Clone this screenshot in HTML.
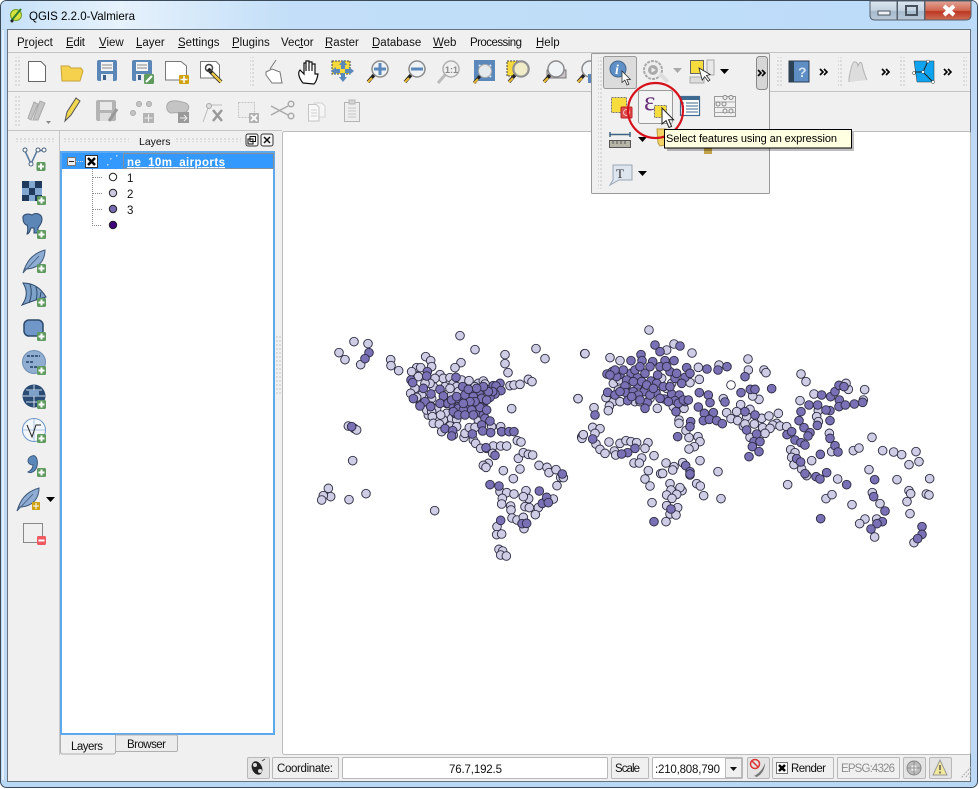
<!DOCTYPE html>
<html><head><meta charset="utf-8"><title>QGIS 2.2.0-Valmiera</title>
<style>
html,body{margin:0;padding:0;background:#fff;width:979px;height:789px;overflow:hidden}
svg{display:block;font-family:"Liberation Sans",sans-serif;font-size:11.5px}
text{fill:#111}
.c circle{r:13px;stroke:#2b2b40;stroke-width:2.7px}
.l circle{fill:#cfcde5}
.d circle{fill:#7a70b5}
</style></head><body>
<svg width="979" height="789" viewBox="0 0 979 789" xmlns="http://www.w3.org/2000/svg">
<defs>
<linearGradient id="tb" x1="0" x2="1" y1="0" y2="0"><stop offset="0" stop-color="#c5e0f8"/><stop offset=".12" stop-color="#e6f2fc"/><stop offset=".3" stop-color="#c2def8"/><stop offset="1" stop-color="#bcdcf9"/></linearGradient>
<linearGradient id="mb" x1="0" x2="0" y1="0" y2="1"><stop offset="0" stop-color="#dbe6f0"/><stop offset=".5" stop-color="#c3d2e0"/><stop offset=".55" stop-color="#a6bacd"/><stop offset="1" stop-color="#b9cad9"/></linearGradient>
<linearGradient id="cb" x1="0" x2="0" y1="0" y2="1"><stop offset="0" stop-color="#e2a596"/><stop offset=".5" stop-color="#d2654f"/><stop offset=".55" stop-color="#bc3620"/><stop offset="1" stop-color="#cf6f57"/></linearGradient>
<pattern id="gp" width="3" height="4" patternUnits="userSpaceOnUse"><rect width="2" height="2" fill="#dcdcdc"/></pattern>
<pattern id="gh" width="4" height="3" patternUnits="userSpaceOnUse"><rect width="2" height="2" fill="#dcdcdc"/></pattern>
<g id="pl"><rect width="9" height="9" rx="1.5" fill="#5f9a5f"/><path d="M4.5 1.5v6M1.5 4.5h6" stroke="#fff" stroke-width="2"/></g>
<g id="mg"><path d="M8 15L2 22" stroke="#222" stroke-width="3.4"/><path d="M6 18L2 22" stroke="#e9b935" stroke-width="2.2"/><circle cx="14" cy="9" r="8" fill="#f0f3f6" stroke="#8b8b8b" stroke-width="1.5"/></g>
<path id="cur" d="M0 0V16L4 12.6 7 19.5 9.6 18.4 6.6 11.8H11.6Z" fill="#fff" stroke="#222" stroke-width="1"/>
<path id="ar" d="M0 0H9L4.5 5Z" fill="#000"/>
<path id="dar" d="M0 0L3 3 0 6M4 0L7 3 4 6" fill="none" stroke="#000" stroke-width="1.6"/>
<g id="fe"><path d="M1 24C4 14 9 5 23 1 23 8 20 15 13 18 9 20 6 20 3 20Z" fill="#8fadd2" stroke="#3e5a7c"/><path d="M1 24L17 7" stroke="#3e5a7c" stroke-width=".8"/></g>
<g id="sv"><rect width="20" height="21" rx="2" fill="#5b86b8"/><rect x="4" y="2" width="12" height="9" fill="#f4f4f4"/><path d="M5 5h10M5 8h10" stroke="#888"/><rect x="4" y="14" width="12" height="7" fill="#e8ecf0"/><rect x="6" y="15" width="3" height="5" fill="#3f5f88"/></g>
</defs>

<!-- window frame -->
<rect x="0.5" y="0.5" width="977" height="787" rx="6" fill="#b9d8f6" stroke="#3b4a58"/>
<path d="M1 7Q1 1 7 1H971Q977 1 977 7V29H1Z" fill="url(#tb)"/>
<path d="M1 29H7V781H1ZM971 29H977V781H971Z" fill="#bdd9f5"/>
<rect x="2" y="30" width="2" height="750" fill="#e3effa"/>
<rect x="7.5" y="29.5" width="963" height="752" fill="#f0f0f0" stroke="#66747f"/>

<!-- title -->
<g><circle cx="16" cy="15" r="5.5" fill="#d8e23e" stroke="#6e9c2c"/><path d="M11 21L21 9" stroke="#2f7d2f" stroke-width="2"/><circle cx="12" cy="21" r="1.5" fill="#222"/></g>
<text x="29" y="20" font-size="12" textLength="106" lengthAdjust="spacingAndGlyphs" style="fill:#000">QGIS 2.2.0-Valmiera</text>

<!-- window buttons -->
<path d="M870 1H897V20H875Q870 20 870 15Z" fill="url(#mb)" stroke="#55606c"/>
<rect x="897.5" y="1" width="27" height="19" fill="url(#mb)" stroke="#55606c"/>
<path d="M925 1H971V15Q971 20 966 20H925Z" fill="url(#cb)" stroke="#55606c"/>
<rect x="878" y="11" width="12" height="4" fill="#eef2f6" stroke="#48525e"/>
<rect x="906" y="6" width="11" height="9" fill="none" stroke="#48525e" stroke-width="2"/>
<path d="M944 6L954 15M954 6L944 15" stroke="#fff" stroke-width="4"/>

<!-- menu -->
<g font-size="11.5">
<text x="17" y="46">Project</text><rect x="24" y="47" width="4" height="1" fill="#111"/>
<text x="66" y="46" textLength="19">Edit</text><rect x="66" y="47" width="7" height="1" fill="#111"/>
<text x="99" y="46">View</text><rect x="99" y="47" width="7" height="1" fill="#111"/>
<text x="136" y="46">Layer</text><rect x="136" y="47" width="6" height="1" fill="#111"/>
<text x="178" y="46">Settings</text><rect x="178" y="47" width="7" height="1" fill="#111"/>
<text x="232" y="46">Plugins</text><rect x="232" y="47" width="7" height="1" fill="#111"/>
<text x="281" y="46">Vector</text><rect x="299" y="47" width="4" height="1" fill="#111"/>
<text x="325" y="46">Raster</text><rect x="325" y="47" width="7" height="1" fill="#111"/>
<text x="372" y="46">Database</text><rect x="372" y="47" width="7" height="1" fill="#111"/>
<text x="433" y="46">Web</text><rect x="433" y="47" width="10" height="1" fill="#111"/>
<text x="470" y="46" textLength="52">Processing</text>
<text x="536" y="46">Help</text><rect x="536" y="47" width="7" height="1" fill="#111"/>
</g>

<!-- toolbar lines -->
<path d="M8 52.5H970M8 91.5H970M8 130.5H282" stroke="#c4c4c4"/>
<rect x="15" y="57" width="5" height="31" fill="url(#gp)"/><rect x="250" y="57" width="5" height="31" fill="url(#gp)"/>
<rect x="15" y="96" width="5" height="31" fill="url(#gp)"/>
<rect x="777" y="57" width="5" height="31" fill="url(#gp)"/><rect x="838" y="57" width="5" height="31" fill="url(#gp)"/><rect x="900" y="57" width="5" height="31" fill="url(#gp)"/><rect x="962" y="57" width="5" height="31" fill="url(#gp)"/>

<!-- toolbar 1 -->
<path d="M28.5 61.5H41L45.5 66V81.5H28.5Z" fill="#fff" stroke="#666"/>
<path d="M61 66H69L71 68H81L83 71 80 81H62Z" fill="#f6d14e" stroke="#c9a43c"/>
<use href="#sv" x="97" y="60"/>
<use href="#sv" x="132" y="60"/><rect x="144" y="74" width="10" height="10" rx="1.5" fill="#5f9a5f"/><path d="M146 82L152 76" stroke="#fff" stroke-width="2"/>
<path d="M165.500 61.500H181L186.500 66V80H165.500Z" fill="#fff" stroke="#777"/><rect x="179" y="75" width="10" height="9" rx="1" fill="#cfa313"/><path d="M184 76v7M180.500 79.500h7" stroke="#fff" stroke-width="1.500"/>
<path d="M200.500 61.500H216L219.500 65V78H200.500Z" fill="#fff" stroke="#777"/><path d="M208 69L221 82" stroke="#222" stroke-width="4"/><path d="M212 73L221 82" stroke="#e8c84a" stroke-width="2.500"/><circle cx="209" cy="68" r="3.500" fill="none" stroke="#444" stroke-width="1.500"/>
<path d="M276 60L270 69" stroke="#777"/><path d="M266 72L272 69 280 72 282 83H272L266 75Z" fill="#fff" stroke="#777"/>
<path d="M303 83C298 77 298 72 300 70L304 74V63H306V71 61H309V71 62H312V71 64H315V74H317L318 74C317 80 315 83 314 84Z" fill="#fff" stroke="#111" stroke-width="1.200"/>
<rect x="332" y="61" width="18" height="13" fill="#f5d93d" stroke="#444" stroke-dasharray="2 1"/>
<path d="M343 60L347 65H345V69H341V65H339ZM343 82L339 77H341V73H345V77H347ZM331 71L336 67V69H340V73H336V75ZM354 71L349 75V73H345V69H349V67Z" fill="#5b88bb"/>
<use href="#mg" x="366" y="60"/><path d="M380 63V75M374 69H386" stroke="#5b88bb" stroke-width="3"/>
<use href="#mg" x="403" y="60"/><path d="M411 69H423" stroke="#5b88bb" stroke-width="3"/>
<path d="M445 75L438 83" stroke="#bbb" stroke-width="3"/><circle cx="451" cy="69" r="8" fill="#f0f0f0" stroke="#b0b0b0" stroke-width="1.500"/>
<text x="445" y="73" font-size="9" font-weight="bold" style="fill:#888">1:1</text>
<rect x="474" y="60" width="21" height="21" fill="#5b88bb"/><path d="M479 65L491 77M491 65L479 77" stroke="#dfe7f0" stroke-width="2"/><circle cx="485" cy="71" r="6.500" fill="#e4e9ee" stroke="#aaa"/><path d="M480 76L474 83" stroke="#222" stroke-width="3"/><path d="M478 79L474 83" stroke="#e9b935" stroke-width="2"/>
<rect x="507" y="61" width="15" height="15" fill="#f5d93d" stroke="#444" stroke-dasharray="2 1"/><use href="#mg" x="507" y="60"/><circle cx="521" cy="69" r="7" fill="#f1ecc8" stroke="#999"/>
<rect x="547" y="70" width="19" height="8" fill="#c9c3c9" stroke="#777"/><use href="#mg" x="542" y="60"/>
<use href="#mg" x="576" y="60"/><rect x="588" y="74" width="5" height="9" fill="#5b88bb"/>

<!-- toolbar 2 (disabled) -->
<g stroke="#aaa" fill="#c4c4c4">
<path d="M28 118L34 102 38 104 31 120ZM33 120L40 101 45 103 38 120Z"/>
<path d="M46 121H51L48.500 124Z" fill="#888" stroke="none"/>
</g>
<path d="M65 121L67 112 76 98 80 101 71 115Z" fill="#f0d74f" stroke="#555"/>
<rect x="96" y="100" width="20" height="21" rx="2" fill="#b4b4b4"/><rect x="100" y="102" width="12" height="8" fill="#e8e8e8"/><rect x="100" y="113" width="11" height="8" fill="#ddd"/><path d="M109 121L117 109" stroke="#999" stroke-width="3"/>
<g fill="#c4c4c4" stroke="#aaa"><circle cx="139" cy="104" r="2.500"/><circle cx="149" cy="104" r="2.500"/><circle cx="133" cy="113" r="2.500"/></g><rect x="143" y="113" width="11" height="10" fill="#b4b4b4"/><path d="M148.500 114v8M144.500 118h8" stroke="#eee"/>
<path d="M167 105C168 100 177 100 182 102 188 103 190 106 188 110 186 114 177 112 172 113 168 113 166 109 167 105Z" fill="#c4c4c4" stroke="#aaa"/><rect x="178" y="112" width="11" height="11" fill="#999"/><path d="M180 118h6M184 115l3 3-3 3" stroke="#eee" fill="none"/>
<path d="M203 122L208 108M208 105L222 105" stroke="#bbb"/><circle cx="209" cy="106" r="2.500" fill="#ddd" stroke="#aaa"/><path d="M213 110L222 121M222 110L213 121" stroke="#999" stroke-width="2.500"/>
<rect x="238.500" y="102.500" width="16" height="15" fill="#eee" stroke="#c4c4c4" stroke-dasharray="2 1"/><rect x="249" y="113" width="10" height="10" rx="1" fill="#b0b0b0"/><path d="M251 115L257 121M257 115L251 121" stroke="#fff" stroke-width="1.800"/>
<path d="M271 106L288 115M271 115L288 106" stroke="#aaa" stroke-width="1.500"/><circle cx="291" cy="104" r="2.800" fill="none" stroke="#aaa" stroke-width="1.500"/><circle cx="291" cy="116" r="2.800" fill="none" stroke="#aaa" stroke-width="1.500"/>
<path d="M314 103H322L325 106V117H314Z" fill="#f5f5f5" stroke="#d4d4d4"/><path d="M308.500 104.500H316L319 107V121H308.500Z" fill="#f8f8f8" stroke="#c4c4c4"/><path d="M311 110h6M311 113h6M311 116h6" stroke="#d0d0d0"/>
<rect x="344.500" y="102.500" width="15" height="19" fill="#eee" stroke="#b4b4b4"/><rect x="349" y="100" width="6" height="4" fill="#d4d4d4" stroke="#b4b4b4"/><path d="M348 108h8M348 111h8M348 114h8M348 117h8" stroke="#c4c4c4"/>

<!-- right toolbar -->
<rect x="789" y="61" width="20" height="21" fill="#5f8ec4" stroke="#273a4f"/><rect x="789" y="61" width="5" height="21" fill="#2c4356"/><text x="798" y="77" font-size="14" font-weight="bold" style="fill:#d5e3f3">?</text>
<use href="#dar" x="820" y="69"/>
<path d="M849 82V78Q852 62 854 62 857 61 858 66 860 60 862 64 864 74 867 80 873 82Z" fill="#ddd" stroke="#b4b4b4"/>
<use href="#dar" x="882" y="69"/>
<path d="M914 61H934V82H917Z" fill="#10a4f0" stroke="#333" stroke-width=".5"/><path d="M914 72L923 72 928 61M923 72L933 82" stroke="#222" fill="none"/><circle cx="914" cy="73" r="1.500" fill="#fff" stroke="#333" stroke-width=".5"/><circle cx="923" cy="72" r="1.500" fill="#fff" stroke="#333" stroke-width=".5"/><circle cx="928" cy="61.500" r="1.500" fill="#fff" stroke="#333" stroke-width=".5"/><circle cx="933" cy="82" r="1.500" fill="#fff" stroke="#333" stroke-width=".5"/>
<use href="#dar" x="944" y="69"/>

<!-- left toolbar -->
<path d="M59.500 131V755" stroke="#c8c8c8"/>
<rect x="14" y="137" width="40" height="5" fill="url(#gh)"/><rect x="63" y="137" width="66" height="5" fill="url(#gh)"/><rect x="175" y="137" width="66" height="5" fill="url(#gh)"/>
<path d="M25 151L31 164 37 151 44 150" fill="none" stroke="#56799e" stroke-width="1.500"/><g fill="#fff" stroke="#44607f"><circle cx="25" cy="150" r="2"/><circle cx="31" cy="164" r="2"/><circle cx="38" cy="150" r="2"/><circle cx="44" cy="150" r="2"/></g><use href="#pl" x="36.500" y="162"/>
<rect x="22" y="181" width="20" height="20" fill="#82a8d1"/><path d="M22 181h7v7h-7zM35 181h7v7h-7zM29 188h6v7h-6zM22 195h7v6h-7zM35 195h7v6h-7z" fill="#1f3a5c"/><use href="#pl" x="37" y="196"/>
<path d="M23 219C22 214 28 213 32 215 36 212 42 214 42 219 42 224 39 226 38 228V233H34V228H31C30 231 29 234 27 234 28 231 28 228 27 225 25 225 23 222 23 219Z" fill="#5c86b6" stroke="#2d4a6c"/><use href="#pl" x="37" y="230"/>
<use href="#fe" x="22" y="249"/><use href="#pl" x="37" y="264"/>
<path d="M23 283Q38 283 46 297 35 300 22 305 30 294 23 283Z" fill="#7ea1c9" stroke="#2d4a6c"/><path d="M30 284Q33 294 29 303M36 287Q38 294 36 300M41 292L40 298" stroke="#2d4a6c" fill="none"/><use href="#pl" x="37" y="298"/>
<rect x="24" y="320" width="19" height="16" rx="5" fill="#7097c7" stroke="#2d4a6c" stroke-width="1.500"/><use href="#pl" x="37" y="332"/>
<g stroke="#6e8db3"><circle cx="34" cy="362" r="11.500" fill="#8faed2"/></g><path d="M27 356h13M26 362h8M30 367h8" stroke="#3e5a7c" stroke-width="2" stroke-dasharray="3 1"/><use href="#pl" x="37" y="366"/>
<circle cx="34" cy="396" r="11.500" fill="#2a4c74"/><path d="M23 396H45M26 390H42M26 402H42M34 385V407" stroke="#cfdceb"/><rect x="29" y="390" width="10" height="6" fill="#7da1c9"/><use href="#pl" x="37" y="400"/>
<circle cx="34" cy="430" r="11.500" fill="#f4f8fc" stroke="#6f97c6"/><path d="M23 430H45M34 419V441" stroke="#a8c3df"/><path d="M27 425L32 437 36 425 41 425" fill="none" stroke="#222"/><use href="#pl" x="37" y="434"/>
<path d="M32 456C37 454 38 462 37 466 36 471 31 474 28 472 32 470 33 467 33 465 27 465 26 458 32 456Z" fill="#5b88bb" stroke="#3e5a7c"/><use href="#pl" x="37" y="468"/>
<use href="#fe" x="16" y="487"/><rect x="32" y="502" width="8" height="8" fill="#cfa313"/><path d="M36 503v6M33 506h6" stroke="#fff"/>
<use href="#ar" x="46" y="497"/>
<rect x="23.500" y="523.500" width="19" height="19" fill="#f0f0f0" stroke="#888"/><rect x="37" y="536" width="9" height="9" rx="1.500" fill="#ee5a60"/><path d="M38.500 540.500h6" stroke="#fff" stroke-width="2"/>

<!-- layers panel -->
<text x="139" y="145" font-size="10.500">Layers</text>
<rect x="246" y="134" width="12" height="12" rx="2" fill="#f5f5f5" stroke="#333"/><path d="M250 136.500h5.500v5h-5.500zM248 139h5v5h-5z" fill="#f5f5f5" stroke="#111"/>
<rect x="261" y="134" width="12" height="12" rx="2" fill="#f5f5f5" stroke="#333"/><path d="M264 137l6 6M270 137l-6 6" stroke="#111" stroke-width="1.500"/>
<rect x="61" y="152" width="213" height="582" fill="#fff" stroke="#5ea9ee" stroke-width="2"/>
<rect x="62" y="153" width="212" height="16" fill="#3399ff"/>
<rect x="67.500" y="157.500" width="8" height="8" fill="#eee" stroke="#777"/><path d="M69 161.500h5" stroke="#222"/>
<path d="M76 161.500h8" stroke="#cde" stroke-dasharray="1 1"/>
<rect x="85.500" y="155.500" width="12" height="12" fill="#fff" stroke="#333"/><path d="M88 158l7 7M95 158l-7 7" stroke="#000" stroke-width="2.500"/>
<g fill="#bcdcf7"><rect x="107" y="164" width="1.500" height="1.500"/><rect x="110" y="158" width="1.500" height="1.500"/><rect x="116" y="155" width="1.500" height="1.500"/></g>
<rect x="123.500" y="153.500" width="150" height="15" fill="none" stroke="#d6893a" stroke-dasharray="1 1"/>
<text x="127" y="166" font-size="11.500" font-weight="bold" style="fill:#fff" text-decoration="underline" textLength="98">ne_10m_airports</text>
<path d="M92.500 169V225.500H102M93 177.500H102M93 193.500H102M93 209.500H102" fill="none" stroke="#888" stroke-dasharray="1 1"/>
<circle cx="113" cy="177" r="3.700" fill="#fff" stroke="#222"/><circle cx="113" cy="193" r="3.700" fill="#cbc9e2" stroke="#222"/><circle cx="113" cy="209" r="3.700" fill="#756bb1" stroke="#222"/><circle cx="113" cy="225" r="3.700" fill="#3f007d" stroke="#222"/>
<text x="127" y="182" font-size="11.500">1</text><text x="127" y="198" font-size="11.500">2</text><text x="127" y="214" font-size="11.500">3</text>

<!-- tabs -->
<path d="M60.500 735V752Q60.500 754 63 754H113Q115.500 754 115.500 752V735" fill="#f0f0f0" stroke="#b0b0b0"/>
<path d="M116 735H176Q177.500 735 177.500 737V750Q177.500 751.500 176 751.500H116" fill="#ececec" stroke="#b0b0b0"/>
<text x="71" y="750" font-size="11.500" textLength="32">Layers</text><text x="127" y="748" font-size="11.500" textLength="39">Browser</text>

<!-- canvas -->
<rect x="282.500" y="131.500" width="688" height="623" rx="2" fill="#fff" stroke="#bcbcbc"/>
<rect x="276" y="336" width="5" height="60" fill="url(#gp)"/>

<!-- points -->
<g class="c l" transform="translate(310 320) scale(.33333)">
<circle cx="450" cy="47"/><circle cx="132" cy="65"/><circle cx="174" cy="71"/><circle cx="87" cy="98"/><circle cx="105" cy="119"/><circle cx="152" cy="134"/><circle cx="495" cy="89"/><circle cx="585" cy="104"/><circle cx="585" cy="131"/><circle cx="594" cy="158"/><circle cx="678" cy="86"/><circle cx="705" cy="116"/><circle cx="824" cy="101"/><circle cx="804" cy="236"/><circle cx="605" cy="266"/><circle cx="815" cy="351"/><circle cx="819" cy="345"/>
<circle cx="242" cy="119"/><circle cx="243" cy="137"/><circle cx="266" cy="152"/><circle cx="347" cy="110"/><circle cx="362" cy="122"/><circle cx="365" cy="140"/><circle cx="453" cy="128"/><circle cx="435" cy="143"/><circle cx="320" cy="143"/><circle cx="332" cy="143"/><circle cx="305" cy="155"/><circle cx="390" cy="164"/><circle cx="400" cy="175"/><circle cx="420" cy="173"/><circle cx="455" cy="180"/><circle cx="477" cy="182"/><circle cx="505" cy="190"/><circle cx="520" cy="183"/><circle cx="525" cy="192"/><circle cx="600" cy="197"/><circle cx="612" cy="195"/><circle cx="630" cy="193"/><circle cx="655" cy="178"/><circle cx="666" cy="185"/>
<circle cx="375" cy="175"/><circle cx="405" cy="200"/><circle cx="370" cy="200"/><circle cx="430" cy="190"/><circle cx="410" cy="280"/><circle cx="400" cy="300"/><circle cx="355" cy="285"/><circle cx="350" cy="270"/><circle cx="380" cy="265"/><circle cx="335" cy="225"/><circle cx="315" cy="205"/><circle cx="325" cy="170"/><circle cx="440" cy="200"/><circle cx="495" cy="200"/><circle cx="425" cy="225"/><circle cx="505" cy="300"/>
<circle cx="302" cy="220"/><circle cx="320" cy="232"/><circle cx="330" cy="255"/><circle cx="360" cy="190"/><circle cx="345" cy="190"/><circle cx="365" cy="235"/><circle cx="362" cy="258"/><circle cx="365" cy="275"/><circle cx="367" cy="290"/><circle cx="370" cy="310"/><circle cx="388" cy="312"/><circle cx="392" cy="285"/><circle cx="410" cy="250"/><circle cx="420" cy="205"/><circle cx="445" cy="215"/><circle cx="425" cy="295"/><circle cx="440" cy="298"/><circle cx="420" cy="318"/><circle cx="440" cy="320"/><circle cx="395" cy="335"/><circle cx="430" cy="345"/><circle cx="462" cy="352"/><circle cx="465" cy="340"/><circle cx="478" cy="323"/><circle cx="495" cy="322"/><circle cx="490" cy="360"/><circle cx="497" cy="370"/><circle cx="512" cy="385"/><circle cx="530" cy="385"/><circle cx="550" cy="378"/><circle cx="572" cy="378"/><circle cx="590" cy="378"/><circle cx="622" cy="362"/><circle cx="633" cy="366"/><circle cx="572" cy="320"/><circle cx="545" cy="320"/><circle cx="575" cy="335"/><circle cx="548" cy="400"/><circle cx="535" cy="430"/><circle cx="520" cy="436"/><circle cx="528" cy="442"/><circle cx="625" cy="415"/><circle cx="640" cy="398"/><circle cx="655" cy="403"/><circle cx="668" cy="405"/><circle cx="580" cy="452"/><circle cx="630" cy="447"/><circle cx="610" cy="476"/><circle cx="687" cy="436"/><circle cx="711" cy="442"/><circle cx="717" cy="458"/><circle cx="738" cy="449"/><circle cx="752" cy="472"/><circle cx="760" cy="473"/><circle cx="741" cy="497"/>
<circle cx="570" cy="515"/><circle cx="590" cy="518"/><circle cx="612" cy="522"/><circle cx="577" cy="535"/><circle cx="575" cy="552"/><circle cx="602" cy="558"/><circle cx="603" cy="570"/><circle cx="648" cy="512"/><circle cx="656" cy="536"/><circle cx="640" cy="530"/><circle cx="645" cy="560"/><circle cx="658" cy="563"/><circle cx="685" cy="563"/><circle cx="676" cy="584"/><circle cx="606" cy="594"/><circle cx="621" cy="600"/><circle cx="640" cy="592"/><circle cx="642" cy="626"/><circle cx="561" cy="620"/><circle cx="560" cy="644"/><circle cx="575" cy="642"/><circle cx="567" cy="688"/><circle cx="578" cy="693"/><circle cx="572" cy="705"/><circle cx="589" cy="708"/><circle cx="730" cy="537"/>
<circle cx="128" cy="422"/><circle cx="115" cy="318"/><circle cx="132" cy="325"/><circle cx="140" cy="330"/><circle cx="55" cy="505"/><circle cx="62" cy="530"/><circle cx="40" cy="527"/><circle cx="35" cy="540"/><circle cx="117" cy="539"/><circle cx="168" cy="521"/><circle cx="374" cy="572"/>
</g>
<g class="c d" transform="translate(310 320) scale(.33333)">
<circle cx="177" cy="98"/><circle cx="165" cy="116"/><circle cx="125" cy="320"/><circle cx="303" cy="180"/><circle cx="308" cy="188"/><circle cx="310" cy="236"/><circle cx="352" cy="155"/><circle cx="350" cy="168"/><circle cx="340" cy="205"/><circle cx="363" cy="222"/><circle cx="390" cy="208"/><circle cx="400" cy="228"/><circle cx="345" cy="245"/><circle cx="330" cy="258"/><circle cx="362" cy="260"/><circle cx="390" cy="250"/><circle cx="414" cy="250"/><circle cx="438" cy="172"/><circle cx="458" cy="200"/><circle cx="485" cy="215"/><circle cx="510" cy="215"/><circle cx="528" cy="207"/><circle cx="550" cy="197"/><circle cx="570" cy="190"/><circle cx="558" cy="198"/><circle cx="573" cy="212"/><circle cx="555" cy="222"/><circle cx="540" cy="232"/><circle cx="520" cy="250"/><circle cx="500" cy="240"/><circle cx="475" cy="235"/><circle cx="455" cy="235"/><circle cx="440" cy="245"/><circle cx="430" cy="262"/><circle cx="445" cy="260"/><circle cx="470" cy="255"/><circle cx="495" cy="258"/><circle cx="520" cy="265"/><circle cx="435" cy="280"/><circle cx="450" cy="275"/><circle cx="475" cy="278"/><circle cx="505" cy="278"/><circle cx="520" cy="285"/><circle cx="525" cy="295"/><circle cx="540" cy="303"/><circle cx="515" cy="315"/><circle cx="518" cy="333"/><circle cx="542" cy="338"/><circle cx="575" cy="335"/><circle cx="597" cy="335"/><circle cx="612" cy="335"/><circle cx="405" cy="326"/><circle cx="428" cy="332"/><circle cx="425" cy="348"/><circle cx="487" cy="342"/><circle cx="528" cy="383"/><circle cx="555" cy="406"/><circle cx="540" cy="494"/><circle cx="567" cy="498"/><circle cx="688" cy="513"/><circle cx="697" cy="550"/><circle cx="710" cy="532"/><circle cx="715" cy="548"/><circle cx="572" cy="601"/><circle cx="636" cy="611"/><circle cx="650" cy="610"/><circle cx="757" cy="462"/>
<circle cx="425" cy="240"/><circle cx="440" cy="230"/><circle cx="465" cy="225"/><circle cx="490" cy="230"/><circle cx="515" cy="235"/><circle cx="530" cy="240"/><circle cx="548" cy="215"/><circle cx="535" cy="215"/><circle cx="520" cy="200"/><circle cx="500" cy="205"/><circle cx="475" cy="208"/><circle cx="445" cy="265"/><circle cx="460" cy="270"/><circle cx="485" cy="270"/><circle cx="510" cy="262"/><circle cx="530" cy="270"/><circle cx="495" cy="245"/><circle cx="480" cy="245"/><circle cx="460" cy="250"/><circle cx="430" cy="275"/><circle cx="445" cy="285"/><circle cx="465" cy="285"/><circle cx="490" cy="285"/>
</g>
<g class="c l" transform="translate(570 320) scale(.33333)">
<circle cx="237" cy="30"/><circle cx="45" cy="101"/><circle cx="120" cy="113"/><circle cx="150" cy="122"/><circle cx="312" cy="72"/><circle cx="290" cy="90"/><circle cx="366" cy="99"/><circle cx="24" cy="236"/><circle cx="534" cy="117"/><circle cx="535" cy="150"/><circle cx="582" cy="150"/><circle cx="588" cy="158"/><circle cx="693" cy="162"/><circle cx="708" cy="185"/>
<circle cx="130" cy="190"/><circle cx="170" cy="195"/><circle cx="120" cy="225"/><circle cx="130" cy="245"/><circle cx="195" cy="245"/><circle cx="240" cy="235"/><circle cx="275" cy="175"/><circle cx="290" cy="205"/><circle cx="330" cy="250"/><circle cx="310" cy="260"/><circle cx="305" cy="190"/><circle cx="210" cy="245"/>
<circle cx="385" cy="142"/><circle cx="388" cy="178"/><circle cx="360" cy="188"/><circle cx="447" cy="135"/><circle cx="150" cy="180"/><circle cx="145" cy="210"/><circle cx="108" cy="233"/><circle cx="150" cy="245"/><circle cx="118" cy="258"/><circle cx="115" cy="272"/><circle cx="72" cy="263"/><circle cx="262" cy="265"/><circle cx="342" cy="265"/><circle cx="327" cy="300"/><circle cx="327" cy="310"/><circle cx="348" cy="332"/><circle cx="357" cy="353"/><circle cx="384" cy="350"/><circle cx="390" cy="365"/><circle cx="373" cy="380"/><circle cx="357" cy="387"/>
<circle cx="68" cy="322"/><circle cx="90" cy="326"/><circle cx="75" cy="340"/><circle cx="36" cy="355"/><circle cx="40" cy="344"/><circle cx="78" cy="372"/><circle cx="90" cy="388"/><circle cx="105" cy="400"/><circle cx="117" cy="366"/><circle cx="150" cy="370"/><circle cx="168" cy="362"/><circle cx="183" cy="365"/><circle cx="200" cy="368"/><circle cx="234" cy="368"/><circle cx="225" cy="385"/><circle cx="133" cy="393"/><circle cx="137" cy="405"/><circle cx="215" cy="414"/><circle cx="192" cy="429"/><circle cx="208" cy="429"/><circle cx="252" cy="407"/><circle cx="288" cy="429"/><circle cx="390" cy="422"/><circle cx="312" cy="440"/><circle cx="338" cy="428"/><circle cx="308" cy="450"/><circle cx="235" cy="452"/><circle cx="272" cy="461"/><circle cx="278" cy="460"/><circle cx="225" cy="477"/><circle cx="240" cy="498"/><circle cx="300" cy="491"/><circle cx="336" cy="512"/><circle cx="330" cy="503"/><circle cx="303" cy="510"/><circle cx="290" cy="525"/><circle cx="320" cy="523"/><circle cx="306" cy="535"/><circle cx="290" cy="557"/><circle cx="323" cy="563"/><circle cx="300" cy="582"/><circle cx="318" cy="585"/><circle cx="288" cy="605"/><circle cx="246" cy="548"/><circle cx="401" cy="527"/><circle cx="453" cy="536"/><circle cx="444" cy="455"/><circle cx="380" cy="491"/><circle cx="391" cy="498"/><circle cx="360" cy="465"/>
<circle cx="470" cy="278"/><circle cx="460" cy="236"/><circle cx="567" cy="238"/><circle cx="548" cy="228"/><circle cx="512" cy="254"/><circle cx="500" cy="275"/><circle cx="483" cy="296"/><circle cx="503" cy="302"/><circle cx="540" cy="268"/><circle cx="530" cy="290"/><circle cx="575" cy="295"/><circle cx="597" cy="288"/><circle cx="625" cy="280"/><circle cx="620" cy="310"/><circle cx="608" cy="315"/><circle cx="630" cy="318"/><circle cx="650" cy="320"/><circle cx="520" cy="318"/><circle cx="553" cy="312"/><circle cx="578" cy="323"/><circle cx="600" cy="325"/><circle cx="585" cy="340"/><circle cx="540" cy="352"/><circle cx="525" cy="312"/>
<circle cx="690" cy="242"/><circle cx="732" cy="222"/><circle cx="745" cy="272"/><circle cx="740" cy="290"/><circle cx="835" cy="208"/><circle cx="828" cy="190"/><circle cx="884" cy="209"/><circle cx="880" cy="240"/><circle cx="778" cy="340"/><circle cx="745" cy="305"/>
<circle cx="662" cy="389"/><circle cx="675" cy="398"/><circle cx="665" cy="412"/><circle cx="672" cy="434"/><circle cx="725" cy="422"/><circle cx="695" cy="447"/><circle cx="710" cy="467"/><circle cx="653" cy="494"/><circle cx="803" cy="477"/><circle cx="768" cy="536"/><circle cx="786" cy="524"/><circle cx="846" cy="554"/><circle cx="850" cy="392"/><circle cx="867" cy="384"/><circle cx="906" cy="352"/><circle cx="938" cy="392"/><circle cx="971" cy="396"/><circle cx="995" cy="404"/><circle cx="1038" cy="395"/><circle cx="1017" cy="434"/><circle cx="1047" cy="425"/><circle cx="897" cy="449"/><circle cx="981" cy="479"/><circle cx="1079" cy="476"/><circle cx="1017" cy="512"/><circle cx="1022" cy="521"/><circle cx="1069" cy="522"/><circle cx="1077" cy="525"/><circle cx="1011" cy="545"/><circle cx="1020" cy="581"/><circle cx="907" cy="518"/><circle cx="930" cy="551"/><circle cx="885" cy="597"/><circle cx="869" cy="611"/><circle cx="920" cy="597"/><circle cx="914" cy="651"/><circle cx="1032" cy="668"/><circle cx="785" cy="395"/>
</g>
<g class="c d" transform="translate(570 320) scale(.33333)">
<circle cx="255" cy="75"/><circle cx="270" cy="95"/><circle cx="330" cy="78"/><circle cx="213" cy="104"/><circle cx="183" cy="122"/><circle cx="216" cy="122"/><circle cx="248" cy="125"/><circle cx="285" cy="122"/><circle cx="312" cy="122"/><circle cx="350" cy="143"/><circle cx="411" cy="147"/><circle cx="444" cy="150"/><circle cx="471" cy="140"/><circle cx="525" cy="170"/><circle cx="111" cy="162"/><circle cx="127" cy="155"/><circle cx="150" cy="163"/><circle cx="183" cy="160"/><circle cx="202" cy="173"/><circle cx="225" cy="160"/><circle cx="263" cy="165"/><circle cx="300" cy="155"/><circle cx="315" cy="175"/><circle cx="345" cy="172"/><circle cx="360" cy="160"/><circle cx="170" cy="180"/><circle cx="204" cy="195"/><circle cx="243" cy="183"/><circle cx="165" cy="198"/><circle cx="222" cy="215"/><circle cx="258" cy="218"/><circle cx="168" cy="218"/><circle cx="113" cy="217"/><circle cx="135" cy="225"/><circle cx="173" cy="242"/><circle cx="232" cy="247"/><circle cx="225" cy="265"/><circle cx="283" cy="237"/><circle cx="305" cy="222"/><circle cx="328" cy="225"/><circle cx="315" cy="242"/><circle cx="345" cy="245"/><circle cx="318" cy="275"/><circle cx="388" cy="218"/><circle cx="415" cy="225"/><circle cx="420" cy="248"/><circle cx="385" cy="261"/><circle cx="403" cy="280"/><circle cx="430" cy="278"/><circle cx="400" cy="302"/><circle cx="418" cy="298"/><circle cx="440" cy="302"/><circle cx="457" cy="311"/><circle cx="362" cy="305"/><circle cx="360" cy="320"/><circle cx="323" cy="350"/><circle cx="75" cy="285"/><circle cx="68" cy="357"/><circle cx="195" cy="385"/><circle cx="173" cy="398"/><circle cx="155" cy="402"/><circle cx="513" cy="218"/><circle cx="541" cy="208"/><circle cx="555" cy="208"/><circle cx="605" cy="206"/><circle cx="465" cy="246"/><circle cx="525" cy="275"/><circle cx="555" cy="285"/><circle cx="530" cy="330"/><circle cx="560" cy="342"/><circle cx="552" cy="365"/><circle cx="570" cy="365"/><circle cx="547" cy="380"/><circle cx="567" cy="395"/><circle cx="537" cy="410"/><circle cx="651" cy="344"/><circle cx="665" cy="335"/><circle cx="675" cy="360"/><circle cx="693" cy="368"/><circle cx="705" cy="375"/><circle cx="687" cy="302"/><circle cx="702" cy="323"/><circle cx="720" cy="338"/><circle cx="714" cy="348"/><circle cx="693" cy="275"/><circle cx="717" cy="255"/><circle cx="743" cy="255"/><circle cx="755" cy="225"/><circle cx="782" cy="230"/><circle cx="795" cy="215"/><circle cx="807" cy="196"/><circle cx="822" cy="200"/><circle cx="808" cy="240"/><circle cx="807" cy="260"/><circle cx="826" cy="255"/><circle cx="853" cy="252"/><circle cx="878" cy="247"/><circle cx="780" cy="272"/><circle cx="768" cy="270"/><circle cx="780" cy="302"/><circle cx="742" cy="316"/><circle cx="780" cy="355"/><circle cx="795" cy="377"/><circle cx="804" cy="396"/><circle cx="751" cy="403"/><circle cx="680" cy="416"/><circle cx="692" cy="426"/><circle cx="705" cy="461"/><circle cx="738" cy="470"/><circle cx="750" cy="477"/><circle cx="770" cy="458"/><circle cx="830" cy="494"/><circle cx="914" cy="479"/><circle cx="911" cy="530"/><circle cx="945" cy="573"/><circle cx="752" cy="596"/><circle cx="252" cy="605"/><circle cx="303" cy="567"/><circle cx="347" cy="437"/><circle cx="360" cy="455"/><circle cx="360" cy="462"/><circle cx="937" cy="605"/><circle cx="921" cy="611"/><circle cx="903" cy="627"/><circle cx="1056" cy="620"/><circle cx="1056" cy="643"/><circle cx="1043" cy="656"/>
<circle cx="140" cy="170"/><circle cx="160" cy="150"/><circle cx="195" cy="150"/><circle cx="210" cy="140"/><circle cx="240" cy="140"/><circle cx="270" cy="140"/><circle cx="290" cy="140"/><circle cx="320" cy="160"/><circle cx="335" cy="190"/><circle cx="190" cy="185"/><circle cx="215" cy="185"/><circle cx="230" cy="195"/><circle cx="260" cy="190"/><circle cx="280" cy="200"/><circle cx="300" cy="200"/><circle cx="150" cy="215"/><circle cx="190" cy="215"/><circle cx="205" cy="225"/><circle cx="240" cy="225"/><circle cx="270" cy="235"/><circle cx="295" cy="245"/><circle cx="325" cy="250"/><circle cx="340" cy="240"/><circle cx="355" cy="240"/><circle cx="135" cy="150"/><circle cx="120" cy="165"/><circle cx="185" cy="230"/><circle cx="210" cy="240"/><circle cx="250" cy="205"/>
<circle cx="483" cy="195" style="fill:#fff"/>
</g>

<!-- status bar -->
<g fill="#f0f0f0" stroke="#b8b8b8">
<rect x="247.500" y="757.500" width="22" height="21" rx="1.500" fill="#e4e4e4"/>
<rect x="272.500" y="757.500" width="66" height="21" rx="1"/>
<rect x="342.500" y="757.500" width="265" height="21" rx="1" fill="#fff"/>
<rect x="611.500" y="757.500" width="37" height="21" rx="1"/>
<rect x="652.500" y="757.500" width="90" height="21" rx="1" fill="#fff"/>
<rect x="747.500" y="757.500" width="22" height="21" rx="1.500" fill="#e4e4e4"/>
<rect x="772.500" y="757.500" width="61" height="21" rx="1"/>
<rect x="837.500" y="757.500" width="62" height="21" rx="1"/>
<rect x="903.500" y="757.500" width="22" height="21" rx="1.500" fill="#e4e4e4"/>
<rect x="929.500" y="757.500" width="22" height="21" rx="1.500" fill="#e4e4e4"/>
</g>
<g><ellipse cx="257" cy="768" rx="5" ry="7" fill="#222" transform="rotate(-25 257 768)"/><circle cx="255" cy="765" r="2" fill="#ddd"/><circle cx="260" cy="771" r="2" fill="#ddd"/><path d="M262 761L265 759" stroke="#444"/></g>
<text x="277" y="772" font-size="11.500" textLength="56">Coordinate:</text>
<text x="449" y="773" font-size="11.500" textLength="53">76.7,192.5</text>
<text x="615" y="772" font-size="11.500" textLength="25">Scale</text>
<text x="655" y="773" font-size="11.500" textLength="65">:210,808,790</text>
<rect x="725.500" y="758.500" width="16" height="19" fill="#f0f0f0" stroke="#bbb"/><path d="M730 767H737L733.500 771Z" fill="#111"/>
<circle cx="755" cy="764" r="4.500" fill="none" stroke="#d33" stroke-width="1.500"/><path d="M752 761L758 767" stroke="#d33" stroke-width="1.500"/><path d="M754 776Q762 772 765 763 765 772 757 777Z" fill="#777"/>
<rect x="776.500" y="762.500" width="11" height="11" fill="#fff" stroke="#777"/><path d="M779 765L785 771M785 765L779 771" stroke="#000" stroke-width="2.500"/>
<text x="791" y="772" font-size="11.500" textLength="35">Render</text>
<text x="841" y="772" font-size="11.500" textLength="54" style="fill:#8d8d8d">EPSG:4326</text>
<circle cx="914" cy="768" r="7" fill="#bbb" stroke="#888"/><circle cx="914" cy="768" r="3" fill="#eee"/><path d="M914 761v14M907 768h14" stroke="#8f8f8f"/>
<path d="M940 760L947 775H933Z" fill="#f2e89a" stroke="#999"/><path d="M940 765v5M940 771.500v2" stroke="#444" stroke-width="1.300"/>
<path d="M971 767L961 778M971 771L965 778M971 775L969 778" stroke="#aaa" stroke-dasharray="2 1"/>

<!-- popup toolbar -->
<rect x="591.500" y="53.500" width="178" height="140" rx="1" fill="#f0f0f0" stroke="#9a9a9a"/>
<rect x="598" y="57" width="5" height="132" fill="url(#gp)"/>
<rect x="603.500" y="56.500" width="33" height="32" rx="2" fill="#dcdcdc" stroke="#9a9a9a"/>
<circle cx="618" cy="69" r="8" fill="#5e8fc7" stroke="#44688f"/><text x="615" y="74" font-family="'Liberation Serif',serif" font-size="14" font-weight="bold" font-style="italic" style="fill:#fff">i</text>
<use href="#cur" transform="translate(622 71) scale(.72)"/>
<circle cx="653" cy="70" r="9" fill="#eee" stroke="#aaa" stroke-dasharray="3 1" stroke-width="2"/><circle cx="653" cy="70" r="5" fill="#aaa"/><path d="M651.500 67.500L656 70 651.500 72.500Z" fill="#eee"/>
<path d="M660 74L668 82" stroke="#ddd" stroke-width="4"/>
<path d="M673 68H682L677.500 73Z" fill="#aaa"/>
<rect x="690.500" y="60.500" width="13" height="13" fill="#f7dc3e" stroke="#666"/><rect x="707" y="60" width="7" height="15" fill="#e8e8e8" stroke="#aaa"/><rect x="690" y="77" width="14" height="6" fill="#dcdcdc" stroke="#aaa"/>
<use href="#cur" transform="translate(699 68) rotate(-15) scale(.78)"/>
<use href="#ar" x="720" y="69"/>
<rect x="756.500" y="56.500" width="11" height="33" rx="3" fill="#d6d6d6" stroke="#888"/><use href="#dar" x="758" y="70"/>

<rect x="611.500" y="97.500" width="15" height="15" fill="#f7dc3e" stroke="#777" stroke-dasharray="2 1"/><rect x="621" y="107" width="11" height="11" rx="1" fill="#dc4a4a" stroke="#b22"/><circle cx="626.500" cy="112.500" r="3" fill="none" stroke="#f6c0c0"/>
<rect x="638.500" y="90.500" width="34" height="33" rx="2" fill="#f4f4f4" stroke="#9a9a9a"/>
<text x="644" y="110" font-family="'Liberation Serif',serif" font-size="27" style="fill:#6b2f7c">ε</text>
<rect x="654.500" y="105.500" width="12" height="12" fill="#f7dc3e" stroke="#777" stroke-dasharray="2 1"/>
<rect x="680.500" y="96.500" width="19" height="19" fill="#fff" stroke="#3d6a8e" stroke-width="1.200"/><rect x="681" y="97" width="18" height="3" fill="#3d6a8e"/><path d="M686 103H698M686 106H698M686 109H698M686 112H698M682 103h2M682 106h2M682 109h2M682 112h2" stroke="#3d6a8e"/>
<rect x="714.500" y="96.500" width="21" height="20" fill="none" stroke="#999"/><path d="M714 102H736M714 107.500H736M714 112.500H736" stroke="#aaa"/><g fill="#f0f0f0" stroke="#888"><circle cx="725" cy="97.500" r="2"/><circle cx="731" cy="97.500" r="2"/><circle cx="718" cy="104" r="2"/><circle cx="724" cy="104" r="2"/><circle cx="725" cy="111" r="2"/><circle cx="731" cy="111" r="2"/></g>
<path d="M610 134.500H630M610 132V137" stroke="#3f6280" stroke-width="1.500" fill="none"/><path d="M630 132V137" stroke="#3f6280" stroke-width="1.500"/><rect x="609.500" y="140.500" width="21" height="7" fill="#b5b5a8" stroke="#555"/><path d="M613 141v3M617 141v3M621 141v3M625 141v3" stroke="#555"/>
<use href="#ar" x="638" y="137"/>
<path d="M657 129H666V145L660 146 658 143Z" fill="#f2d466" stroke="#b89a44"/>
<rect x="704" y="148" width="8" height="6" fill="#c3a34a"/>
<path d="M613 165H632V180H619L610 185 613 180Z" fill="#dde6ef" stroke="#9aa6b2"/>
<text x="616" y="178" font-family="'Liberation Serif',serif" font-size="13" style="fill:#333">T</text>
<use href="#ar" x="638" y="171"/>

<!-- red circle -->
<circle cx="655.500" cy="110.500" r="27.500" fill="none" stroke="#d5121c" stroke-width="2.200"/>

<!-- tooltip -->
<rect x="667" y="132" width="187" height="19" fill="#000" opacity=".25"/>
<rect x="664.500" y="129.500" width="187" height="18.500" fill="#ffffe1" stroke="#000"/>
<text x="666" y="142" font-size="11" textLength="171" style="fill:#000">Select features using an expression</text>
<use href="#cur" x="662" y="108"/>
</svg>
</body></html>
